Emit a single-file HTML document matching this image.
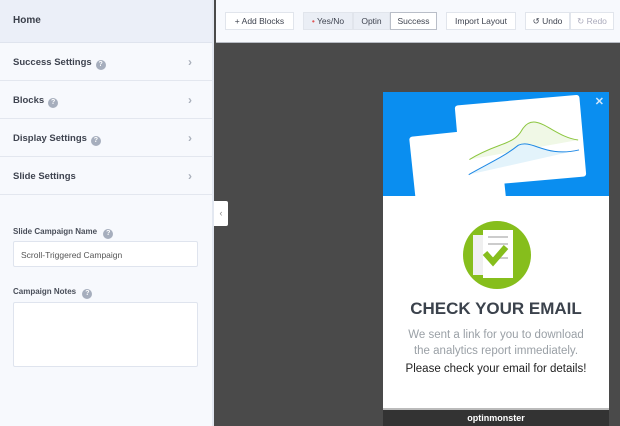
<!DOCTYPE html>
<html><head><style>
*{box-sizing:border-box;margin:0;padding:0}
body{width:620px;height:426px;overflow:hidden;font-family:"Liberation Sans",sans-serif;background:#4a4a4a;position:relative}
.side{position:absolute;left:0;top:0;width:214px;height:426px;background:#f7f9fd;border-right:2px solid #e3e8f1}
.home{height:43px;background:#ebeff8;border-bottom:1px solid #dfe4ee;font-size:10px;color:#3a3f4a;font-weight:bold;padding:15px 0 0 13px}
.row{height:38px;border-bottom:1px solid #e3e7ef;font-size:9.5px;color:#3f4450;font-weight:bold;padding:14px 0 0 13px;position:relative}
.q{display:inline-block;width:10px;height:10px;border-radius:50%;background:#a6aebd;color:#fff;font-size:7px;text-align:center;line-height:10px;margin-left:4px;vertical-align:-1px}
.chev{position:absolute;right:20px;top:12px;color:#aab0bb;font-size:12px}
.lbl{position:absolute;left:13px;font-size:8px;font-weight:bold;color:#4a4f5a}
.inp{position:absolute;left:13px;width:185px;background:#fff;border:1px solid #dfe4ee;border-radius:2px;font-size:8.5px;color:#555;padding:8px 7px}
.top{position:absolute;left:216px;top:0;width:404px;height:43px;background:#f7f9fd;border-bottom:1px solid #b8bcc4}
.btn{position:absolute;top:12px;height:18px;background:#fff;border:1px solid #e1e5ec;font-size:8.5px;color:#3f4450;line-height:16px;text-align:center}
.pop{position:absolute;left:383px;top:92px;width:226px;height:334px;background:#fff}
</style></head><body>
<div class="side">
<div class="home">Home</div>
<div class="row">Success Settings<span class="q">?</span><span class="chev">›</span></div>
<div class="row">Blocks<span class="q">?</span><span class="chev">›</span></div>
<div class="row">Display Settings<span class="q">?</span><span class="chev">›</span></div>
<div class="row">Slide Settings<span class="chev">›</span></div>
<div class="lbl" style="top:227px">Slide Campaign Name <span class="q">?</span></div>
<div class="inp" style="top:241px;height:26px">Scroll-Triggered Campaign</div>
<div class="lbl" style="top:287px">Campaign Notes <span class="q">?</span></div>
<div class="inp" style="top:302px;height:65px"></div>
</div>
<div style="position:absolute;left:214px;top:201px;width:14px;height:25px;background:#fff;border-radius:0 2px 2px 0;color:#888;font-size:9px;text-align:center;line-height:25px">‹</div>
<div class="top">
<div class="btn" style="left:9px;width:69px">+ Add Blocks</div>
<div class="btn" style="left:87px;width:50px;background:#eaeef5"><span style="color:#e05555">•</span> Yes/No</div>
<div class="btn" style="left:137px;width:37px;background:#eaeef5">Optin</div>
<div class="btn" style="left:174px;width:47px;border-color:#b9bec8">Success</div>
<div class="btn" style="left:230px;width:70px">Import Layout</div>
<div class="btn" style="left:309px;width:45px">↺ Undo</div>
<div class="btn" style="left:354px;width:44px;color:#aab">↻ Redo</div>
</div>
<div class="pop">
<div style="position:absolute;left:0;top:0;width:226px;height:104px;background:#0a8ef0;overflow:hidden">
<div style="position:absolute;left:30px;top:40px;width:90px;height:80px;background:#fff;transform:rotate(-6deg);border-radius:3px"></div>
<div style="position:absolute;left:75px;top:8px;width:125px;height:82px;background:#fff;transform:rotate(-5deg);border-radius:3px">
<svg width="125" height="82" style="position:absolute;left:0;top:0"><path d="M10 55 C40 40 55 45 65 30 C80 10 95 40 120 45" stroke="#8cc63f" fill="#f0f8e6"/><path d="M8 70 C30 60 45 55 60 45 C75 40 85 60 120 55" stroke="#1e88e5" fill="#e3f3fb"/></svg></div>
<div style="position:absolute;right:5px;top:3px;color:#cfe6fb;font-size:11px;font-weight:bold">✕</div>
</div>
<svg style="position:absolute;left:80px;top:129px" width="68" height="68"><circle cx="34" cy="34" r="34" fill="#86be1c"/><rect x="10" y="14" width="30" height="40" fill="#f0f0f0"/><rect x="20" y="9" width="30" height="48" fill="#fff"/><rect x="25" y="15" width="20" height="2" fill="#ccc"/><rect x="25" y="22" width="20" height="2" fill="#ccc"/><rect x="25" y="36" width="20" height="2" fill="#ccc"/><path d="M22 32 L30 41 L43 26" stroke="#86be1c" stroke-width="6" fill="none"/></svg>
<div style="position:absolute;top:207px;width:226px;text-align:center;font-size:17px;font-weight:bold;color:#3b424c">CHECK YOUR EMAIL</div>
<div style="position:absolute;top:235px;width:226px;text-align:center;font-size:11.5px;color:#9aa0a6;line-height:16px">We sent a link for you to download<br>the analytics report immediately.</div>
<div style="position:absolute;top:271px;width:226px;text-align:center;font-size:11.5px;color:#222">Please check your email for details!</div>
<div style="position:absolute;top:316px;width:226px;height:2px;background:#bbb"></div>
<div style="position:absolute;top:318px;width:226px;height:16px;background:#333;color:#fff;font-size:9px;font-weight:bold;text-align:center;line-height:16px">optinmonster</div>
</div>
</body></html>
